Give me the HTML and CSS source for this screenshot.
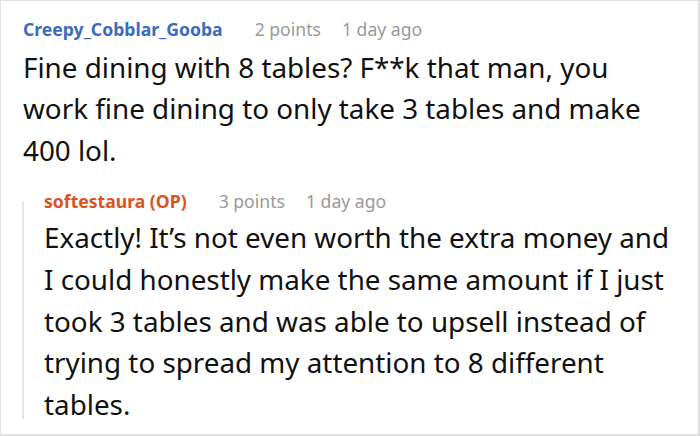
FILE: index.html
```html
<!DOCTYPE html>
<html>
<head>
<meta charset="utf-8">
<link rel="stylesheet" href="styles.css">
</head>
<body>
<div class="frame">
  <div class="comment">
    <div class="meta">
      <span class="user">Creepy_Cobblar_Gooba</span>
      <span class="points">2 points</span>
      <span class="time">1 day ago</span>
    </div>
    <div class="body">Fine dining with 8 tables? F**k that man, you work fine dining to only take 3 tables and make 400 lol.</div>
  </div>
  <div class="reply">
    <div class="meta">
      <span class="user op">softestaura (OP)</span>
      <span class="points">3 points</span>
      <span class="time">1 day ago</span>
    </div>
    <div class="body">Exactly! It’s not even worth the extra money and I could honestly make the same amount if I just took 3 tables and was able to upsell instead of trying to spread my attention to 8 different tables.</div>
  </div>
</div>
</body>
</html>
```

FILE: styles.css
```css
* { box-sizing: border-box; }
html, body { margin: 0; padding: 0; background: #fff; }
body { font-family: "Noto Sans", "Open Sans", sans-serif; color: #111; }
.frame {
  width: 700px;
  height: 436px;
  border-top: 1px solid #e2e2e2;
  border-left: 1px solid #e2e2e2;
  border-right: 2px solid #e2e2e2;
  border-bottom: 2px solid #e2e2e2;
  padding: 15.9px 20px 0 22px;
  overflow: hidden;
}
.meta {
  display: flex;
  align-items: baseline;
  font-size: 17.6px;
  line-height: 24px;
  color: #999;
}
.user { font-weight: bold; color: #3a6bbd; margin-right: 32px; }
.user.op { color: #d9531e; }
.points { margin-right: 21px; }
.body {
  font-size: 27.8px;
  line-height: 41.75px;
  margin-top: 5.7px;
  color: #111;
}
.reply {
  position: relative;
  margin-top: 17.5px;
  padding-left: 21px;
}
.reply::before {
  content: "";
  position: absolute;
  left: -1px;
  top: 11.3px;
  width: 2px;
  height: 218px;
  background: #e6e6e6;
}
.reply .body { margin-top: 3.7px; }
```
